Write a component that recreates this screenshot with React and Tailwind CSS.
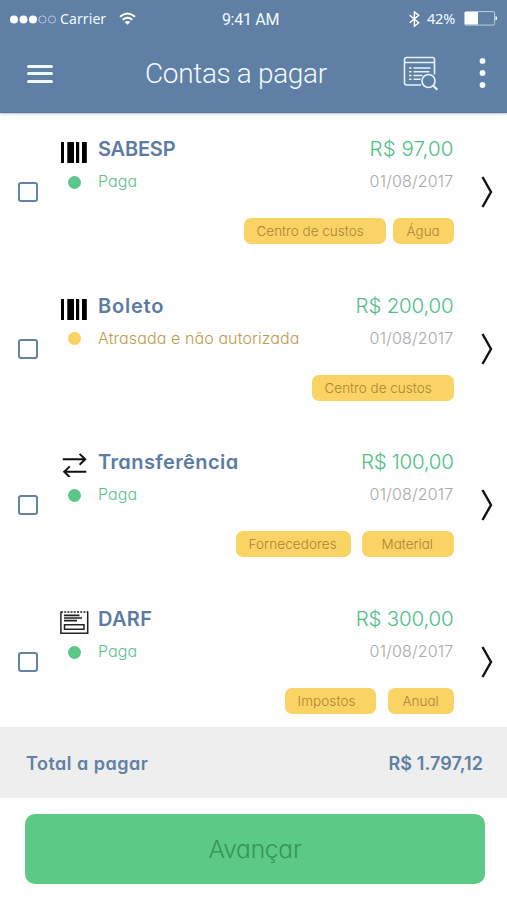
const bills = [
  {
    name: 'SABESP', nameClass: 'tracking-[-0.2px]', icon: 'barcode', status: 'Paga', late: false, amount: 'R$ 97,00', amountClass: 'tracking-[0.1px]', date: '01/08/2017',
    tags: [{ label: 'Centro de custos', box: 'w-[142px] pl-[13px]' }, { label: 'Água', box: 'w-[61px] pl-[14px] ml-[7px]' }],
  },
  {
    name: 'Boleto', nameClass: 'tracking-[0.8px]', icon: 'barcode', status: 'Atrasada e não autorizada', late: true, amount: 'R$ 200,00', amountClass: 'tracking-[-0.2px]', date: '01/08/2017',
    tags: [{ label: 'Centro de custos', box: 'w-[142px] pl-[13px]' }],
  },
  {
    name: 'Transferência', nameClass: 'tracking-[0.4px]', icon: 'transfer', status: 'Paga', late: false, amount: 'R$ 100,00', amountClass: 'tracking-[-0.3px]', date: '01/08/2017',
    tags: [{ label: 'Fornecedores', box: 'w-[115px] pl-[13px] tracking-[0.1px]' }, { label: 'Material', box: 'w-[92px] pl-[20px] ml-[11px]' }],
  },
  {
    name: 'DARF', nameClass: 'tracking-[0.3px]', icon: 'receipt', status: 'Paga', late: false, amount: 'R$ 300,00', amountClass: 'tracking-[-0.2px]', date: '01/08/2017',
    tags: [{ label: 'Impostos', box: 'w-[91px] pl-[13px] tracking-[0.1px]' }, { label: 'Anual', box: 'w-[66px] pl-[15px] ml-[12px]' }],
  },
]

function BillIcon({ type }) {
  if (type === 'barcode') {
    return (
      <svg width="28" height="24" viewBox="0 0 28 24">
        <path d="M1 2h3v21H1zM7.300 2h6.700v21H7.300zM16 2h3.200v21H16zM22 2h.8v21H22zM22.800 2h4v21h-4z" />
      </svg>
    )
  }
  if (type === 'transfer') {
    return (
      <svg width="28" height="24" viewBox="0 0 28 24" fill="none" stroke="#111" strokeWidth="2">
        <path d="M2.800 6.300h22M19.600 .9l5.600 5.400-5.600 5.400M26.300 18.800h-22M9.800 13.400l-5.600 5.400 5.600 5.400" />
      </svg>
    )
  }
  return (
    <svg width="29" height="24" viewBox="0 0 29 24" fill="none" stroke="#222" strokeWidth="1.5">
      <path d="M.9 1.500v21.700h26.800V1.500" />
      <path d="M1 2h27" strokeDasharray="2 1.200" />
      <path d="M4 5.400h15.500M4 8h18M4 10.600h13" strokeWidth="1.600" />
      <path d="M4.500 14.700h19.500v4.500h-19.500z" />
    </svg>
  )
}

function StatusBar() {
  return (
    <div className="grid h-[37px] grid-cols-3 items-center pl-[10px] pr-[9px]">
      <div className="flex items-center">
        <svg width="47" height="10" viewBox="0 0 47 10" fill="#fff">
          <circle cx="4" cy="5.500" r="4" />
          <circle cx="13.500" cy="5.500" r="4" />
          <circle cx="23" cy="5.500" r="4" />
          <circle cx="32.500" cy="5.500" r="3.600" fill="none" stroke="#c5dbe9" strokeWidth=".8" />
          <circle cx="42" cy="5.500" r="3.600" fill="none" stroke="#c5dbe9" strokeWidth=".8" />
        </svg>
        <span className="ml-[3px] font-['Noto_Sans'] text-[14px] leading-5 tracking-[0.1px]">Carrier</span>
        <svg className="ml-[13px]" width="17" height="14" viewBox="0 0 17 14" fill="none" stroke="#fff" strokeWidth="2">
          <path d="M1 4.800q7.500-6.500 15 0M3.700 7.700q4.800-4 9.600 0" />
          <path d="M5.700 10q2.800-2.200 5.600 0L8.500 12.700z" fill="#fff" stroke="none" />
        </svg>
      </div>
      <div className="pr-[7px] pt-[3px] text-center font-[Roboto] text-[16px] leading-5 tracking-[-0.3px]">9:41 AM</div>
      <div className="flex items-center justify-end">
        <svg width="11" height="16" viewBox="0 0 11 16" fill="none" stroke="#fff" strokeWidth="1.400">
          <path d="M.7 4.300l9 7.500-4.300 3.400V.9l4.300 3.400-9 7.500" />
        </svg>
        <span className="ml-[7px] pb-[2px] font-['Noto_Sans'] text-[14.500px] leading-5 tracking-[-0.2px]">42%</span>
        <svg className="ml-[9px]" width="34" height="15" viewBox="0 0 34 15">
          <rect x=".6" y=".6" width="30" height="13.500" rx="1.500" fill="none" stroke="#b9d2e3" />
          <rect x="1" y="1" width="13" height="12.500" fill="#fff" />
          <path d="M32 5.500q1.500 1.700 0 3.400z" fill="#fff" stroke="#fff" />
        </svg>
      </div>
    </div>
  )
}

function Header() {
  return (
    <header className="h-[113px] shrink-0 border-b border-[#57769a] bg-[#5f7fa4] text-[#f0fbff] shadow-[0_1px_2px_rgba(80,100,130,0.4)]">
      <StatusBar />
      <div className="flex h-[73px] items-center pl-[27px] pr-[21px]">
        <button className="flex w-[26px] flex-col gap-[4.500px]">
          <span className="h-[3px] rounded-sm bg-[#eefaff]" />
          <span className="h-[3px] rounded-sm bg-[#eefaff]" />
          <span className="h-[3px] rounded-sm bg-[#eefaff]" />
        </button>
        <h1 className="ml-[92px] whitespace-nowrap font-[Roboto] text-[28px] font-light leading-9 tracking-[-0.35px]">Contas a pagar</h1>
        <div className="ml-auto flex items-center">
          <svg width="36" height="36" viewBox="0 0 36 36" fill="none" stroke="#e4f3fa" strokeWidth="1.600">
            <path d="M18 29H3.500a2 2 0 0 1-2-2V3.500a2 2 0 0 1 2-2h26a2 2 0 0 1 2 2v15M1.500 6.500h30" />
            <path d="M6 12h2.500M10.500 12h17M6 15.800h2.500M10.500 15.800h16M6 19.500h2.500M10.500 19.500h9M6 23.200h2.500M10.500 23.200h7" />
            <circle cx="25.500" cy="25" r="6.500" />
            <path d="M30.300 29.800l4 4" strokeWidth="2.200" />
          </svg>
          <svg className="ml-[40px]" width="7" height="32" viewBox="0 0 7 32" fill="#f4fcff">
            <circle cx="3.500" cy="2.900" r="2.900" />
            <circle cx="3.500" cy="15" r="2.900" />
            <circle cx="3.500" cy="27" r="2.900" />
          </svg>
        </div>
      </div>
    </header>
  )
}

function Bill({ bill }) {
  return (
    <li className="flex h-[156.700px] shrink-0 pl-[18px] pr-[14px]">
      <div className="mt-[69px] h-5 w-5 rounded-[3px] border-2 border-[#6481a6]" />
      <div className="ml-[22px] w-[393.500px] pt-6">
        <div className="flex h-6 items-center">
          <div className="w-[38px] self-start pt-[3px]"><BillIcon type={bill.icon} /></div>
          <h2 className={'text-[20px] font-semibold leading-6 text-[#5b7ba3] ' + bill.nameClass}>{bill.name}</h2>
          <span className={'ml-auto whitespace-nowrap text-[20.500px] font-light leading-6 text-[#50bf86] ' + bill.amountClass}>{bill.amount}</span>
        </div>
        <div className="mt-2 flex h-6 items-center">
          <div className="w-[38px] pl-[8px] pt-[2px]">
            <div className={'h-[13px] w-[13px] rounded-full ' + (bill.late ? 'bg-[#fad163]' : 'bg-[#5bc788]')} />
          </div>
          <span className={'text-[16px] font-light leading-6 tracking-[0.1px] ' + (bill.late ? 'text-[#bd9c4c]' : 'text-[#5cc38c]')}>{bill.status}</span>
          <span className="ml-auto text-[16px] font-light leading-6 tracking-[0.2px] text-[#a9a9a9]">{bill.date}</span>
        </div>
        <div className="mt-[25px] flex justify-end">
          {bill.tags.map((t) => (
            <span key={t.label} className={'h-[26px] whitespace-nowrap rounded-[7px] bg-[#fad365] text-[13.500px] font-light leading-[26px] text-[#aa8536] ' + t.box}>{t.label}</span>
          ))}
        </div>
      </div>
      <svg className="ml-auto mt-[63px]" width="12" height="32" viewBox="0 0 12 32" fill="none" stroke="#111" strokeWidth="2.400">
        <path d="M1.500 1l8.500 15-8.500 15" />
      </svg>
    </li>
  )
}

export default function App() {
  return (
    <div className="flex h-[900px] w-[507px] flex-col overflow-hidden bg-[#fefefe] font-[Inter,sans-serif] [font-feature-settings:'cv11']">
      <Header />
      <ul className="flex h-[614px] flex-col overflow-hidden">
        {bills.map((b) => <Bill key={b.name} bill={b} />)}
      </ul>
      <div className="flex h-[71px] items-center justify-between bg-[#eee] pl-[26px] pr-6 pt-[2px] text-[18px] font-semibold text-[#6080a5]">
        <span className="tracking-[0.5px]">Total a pagar</span>
        <span className="tracking-[0.1px]">R$ 1.797,12</span>
      </div>
      <button className="ml-[25px] mr-[22px] mt-4 h-[70px] rounded-[10px] bg-[#5cc986] text-[24.500px] font-light tracking-[-0.2px] text-[#35955b]">Avançar</button>
    </div>
  )
}
